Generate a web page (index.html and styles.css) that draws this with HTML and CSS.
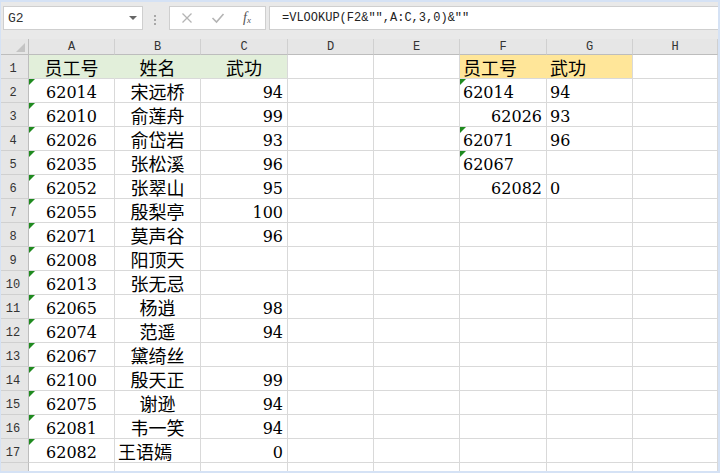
FILE: index.html
```html
<!DOCTYPE html>
<html lang="zh">
<head>
<meta charset="utf-8">
<link rel="stylesheet" href="styles.css">
</head>
<body>
<div class="frame">
  <div class="toolbar">
    <div class="namebox"><span>G2</span>
      <svg class="drop" width="8" height="5" viewBox="0 0 8 5"><path d="M0 0 L8 0 L4 4 Z" fill="#666"/></svg>
    </div>
    <div class="dots"><i></i><i></i><i></i></div>
    <div class="fnbox">
      <svg width="12" height="12" viewBox="0 0 12 12"><path d="M1.5 1.5 L10.5 10.5 M10.5 1.5 L1.5 10.5" stroke="#b4b4b4" stroke-width="1.3" fill="none"/></svg>
      <svg width="14" height="12" viewBox="0 0 14 12"><path d="M1.5 6 L5.5 10 L12.5 2" stroke="#b4b4b4" stroke-width="1.6" fill="none"/></svg>
      <span class="fx">f<sub>x</sub></span>
    </div>
    <div class="formula">=VLOOKUP(F2&amp;"",A:C,3,0)&amp;""</div>
  </div>
  <div class="sheet">
    <div class="corner"><span class="tri"></span></div>
    <div class="ch">A</div><div class="ch">B</div><div class="ch">C</div><div class="ch">D</div><div class="ch">E</div><div class="ch">F</div><div class="ch">G</div><div class="ch">H</div>

    <div class="rh">1</div>
    <div class="c cj ctr green gfill">员工号</div><div class="c cj ctr green gfill">姓名</div><div class="c cj ctr green">武功</div><div class="c"></div><div class="c"></div><div class="c cj lft yellow yfill">员工号</div><div class="c cj lft yellow">武功</div><div class="c"></div>

    <div class="rh">2</div>
    <div class="c n ctr t">62014</div><div class="c cj ctr">宋远桥</div><div class="c n rgt">94</div><div class="c"></div><div class="c"></div><div class="c n lft t">62014</div><div class="c n lft">94</div><div class="c"></div>

    <div class="rh">3</div>
    <div class="c n ctr t">62010</div><div class="c cj ctr">俞莲舟</div><div class="c n rgt">99</div><div class="c"></div><div class="c"></div><div class="c n rgt">62026</div><div class="c n lft">93</div><div class="c"></div>

    <div class="rh">4</div>
    <div class="c n ctr t">62026</div><div class="c cj ctr">俞岱岩</div><div class="c n rgt">93</div><div class="c"></div><div class="c"></div><div class="c n lft t">62071</div><div class="c n lft">96</div><div class="c"></div>

    <div class="rh">5</div>
    <div class="c n ctr t">62035</div><div class="c cj ctr">张松溪</div><div class="c n rgt">96</div><div class="c"></div><div class="c"></div><div class="c n lft t">62067</div><div class="c n lft"></div><div class="c"></div>

    <div class="rh">6</div>
    <div class="c n ctr t">62052</div><div class="c cj ctr">张翠山</div><div class="c n rgt">95</div><div class="c"></div><div class="c"></div><div class="c n rgt">62082</div><div class="c n lft">0</div><div class="c"></div>

    <div class="rh">7</div>
    <div class="c n ctr t">62055</div><div class="c cj ctr">殷梨亭</div><div class="c n rgt">100</div><div class="c"></div><div class="c"></div><div class="c"></div><div class="c"></div><div class="c"></div>

    <div class="rh">8</div>
    <div class="c n ctr t">62071</div><div class="c cj ctr">莫声谷</div><div class="c n rgt">96</div><div class="c"></div><div class="c"></div><div class="c"></div><div class="c"></div><div class="c"></div>

    <div class="rh">9</div>
    <div class="c n ctr t">62008</div><div class="c cj ctr">阳顶天</div><div class="c n rgt"></div><div class="c"></div><div class="c"></div><div class="c"></div><div class="c"></div><div class="c"></div>

    <div class="rh">10</div>
    <div class="c n ctr t">62013</div><div class="c cj ctr">张无忌</div><div class="c n rgt"></div><div class="c"></div><div class="c"></div><div class="c"></div><div class="c"></div><div class="c"></div>

    <div class="rh">11</div>
    <div class="c n ctr t">62065</div><div class="c cj ctr">杨逍</div><div class="c n rgt">98</div><div class="c"></div><div class="c"></div><div class="c"></div><div class="c"></div><div class="c"></div>

    <div class="rh">12</div>
    <div class="c n ctr t">62074</div><div class="c cj ctr">范遥</div><div class="c n rgt">94</div><div class="c"></div><div class="c"></div><div class="c"></div><div class="c"></div><div class="c"></div>

    <div class="rh">13</div>
    <div class="c n ctr t">62067</div><div class="c cj ctr">黛绮丝</div><div class="c n rgt"></div><div class="c"></div><div class="c"></div><div class="c"></div><div class="c"></div><div class="c"></div>

    <div class="rh">14</div>
    <div class="c n ctr t">62100</div><div class="c cj ctr">殷天正</div><div class="c n rgt">99</div><div class="c"></div><div class="c"></div><div class="c"></div><div class="c"></div><div class="c"></div>

    <div class="rh">15</div>
    <div class="c n ctr t">62075</div><div class="c cj ctr">谢逊</div><div class="c n rgt">94</div><div class="c"></div><div class="c"></div><div class="c"></div><div class="c"></div><div class="c"></div>

    <div class="rh">16</div>
    <div class="c n ctr t">62081</div><div class="c cj ctr">韦一笑</div><div class="c n rgt">94</div><div class="c"></div><div class="c"></div><div class="c"></div><div class="c"></div><div class="c"></div>

    <div class="rh">17</div>
    <div class="c n ctr t">62082</div><div class="c cj lft">王语嫣</div><div class="c n rgt">0</div><div class="c"></div><div class="c"></div><div class="c"></div><div class="c"></div><div class="c"></div>

    <div class="rh"></div>
    <div class="c"></div><div class="c"></div><div class="c"></div><div class="c"></div><div class="c"></div><div class="c"></div><div class="c"></div><div class="c"></div>
  </div>
</div>
</body>
</html>
```

FILE: styles.css
```css
html, body {
  margin: 0;
  padding: 0;
  background: #ffffff;
}

.frame {
  width: 720px;
  height: 473px;
  box-sizing: border-box;
  border-top: 2px solid #d5e2f5;
  border-left: 1px solid #d5e2f5;
  border-right: 2px solid #d5e2f5;
  border-bottom: 2px solid #d5e2f5;
  background: #e8e8e8;
  overflow: hidden;
  display: flex;
  flex-direction: column;
}

.toolbar {
  height: 37px;
  flex: none;
  box-sizing: border-box;
  padding: 4px 0 0 2px;
  display: flex;
  align-items: flex-start;
  background: #e9e9e9;
}

.namebox {
  width: 140px;
  height: 24px;
  box-sizing: border-box;
  border: 1px solid #cfcfcf;
  background: #fff;
  display: flex;
  align-items: center;
  justify-content: space-between;
  padding: 0 5px 0 4px;
  font-family: "Liberation Mono", monospace;
  font-size: 13px;
  color: #333;
}

.dots {
  width: 3px;
  margin: 9px 0 0 11px;
  display: flex;
  flex-direction: column;
  gap: 2px;
}

.dots i {
  display: block;
  width: 2px;
  height: 2px;
  background: #a8a8a8;
}

.fnbox {
  width: 97px;
  height: 24px;
  margin-left: 12px;
  box-sizing: border-box;
  border: 1px solid #cfcfcf;
  background: #fff;
  display: flex;
  align-items: center;
  padding: 0 0 0 11px;
  gap: 18px;
}

.fx {
  font-family: "Liberation Serif", serif;
  font-style: italic;
  font-size: 14px;
  color: #555;
  line-height: 1;
}

.fx sub {
  font-size: 9px;
  vertical-align: -1px;
}

.formula {
  flex: 1;
  height: 24px;
  margin-left: 3px;
  box-sizing: border-box;
  border: 1px solid #cfcfcf;
  border-right: none;
  background: #fff;
  padding: 0 0 0 12px;
  display: flex;
  align-items: center;
  font-family: "Liberation Mono", monospace;
  font-size: 12px;
  color: #222;
  white-space: pre;
}

.sheet {
  flex: 1;
  display: grid;
  grid-template-columns: 28px 86px 86px 87px 86px 86px 87px 86px 1fr;
  grid-template-rows: 16px repeat(18, 24px);
  background: #fff;
}

.corner {
  background: #e6e6e6;
  border-right: 1px solid #bdbdbd;
  border-bottom: 1px solid #bdbdbd;
  box-sizing: border-box;
  position: relative;
}

.corner .tri {
  position: absolute;
  right: 3px;
  bottom: 2px;
  width: 0;
  height: 0;
  border-left: 9px solid transparent;
  border-bottom: 9px solid #c4c4c4;
}

.ch {
  background: #e6e6e6;
  border-right: 1px solid #d0d0d0;
  border-bottom: 1px solid #bdbdbd;
  box-sizing: border-box;
  font-family: "Liberation Mono", monospace;
  font-size: 12px;
  color: #333;
  text-align: center;
  line-height: 16px;
}

.rh {
  background: #e6e6e6;
  border-right: 1px solid #bdbdbd;
  border-bottom: 1px solid #d0d0d0;
  box-sizing: border-box;
  font-family: "Liberation Mono", monospace;
  font-size: 12px;
  color: #333;
  display: flex;
  align-items: flex-end;
  justify-content: center;
  padding: 0 3px 2px 0;
  line-height: 14px;
}

.c {
  box-sizing: border-box;
  border-right: 1px solid #d9d9d9;
  border-bottom: 1px solid #d9d9d9;
  display: flex;
  align-items: flex-end;
  position: relative;
  color: #000;
  white-space: nowrap;
  overflow: visible;
}

.n {
  font-family: "DejaVu Serif", "Liberation Serif", serif;
  font-size: 16px;
  line-height: 18px;
}

.cj {
  font-family: "Noto Sans CJK SC", sans-serif;
  font-size: 18px;
  line-height: 22px;
}

.ctr {
  justify-content: center;
}

.lft {
  justify-content: flex-start;
  padding-left: 3px;
}

.rgt {
  justify-content: flex-end;
  padding-right: 4px;
}

.green {
  background: #e2efda;
}

.yellow {
  background: #ffe699;
}

.gfill {
  border-right-color: #e2efda;
}

.yfill {
  border-right-color: #ffe699;
}

.t::before {
  content: "";
  position: absolute;
  left: 0;
  top: 0;
  width: 0;
  height: 0;
  border-top: 6px solid #1f8a1f;
  border-right: 6px solid transparent;
}
```
